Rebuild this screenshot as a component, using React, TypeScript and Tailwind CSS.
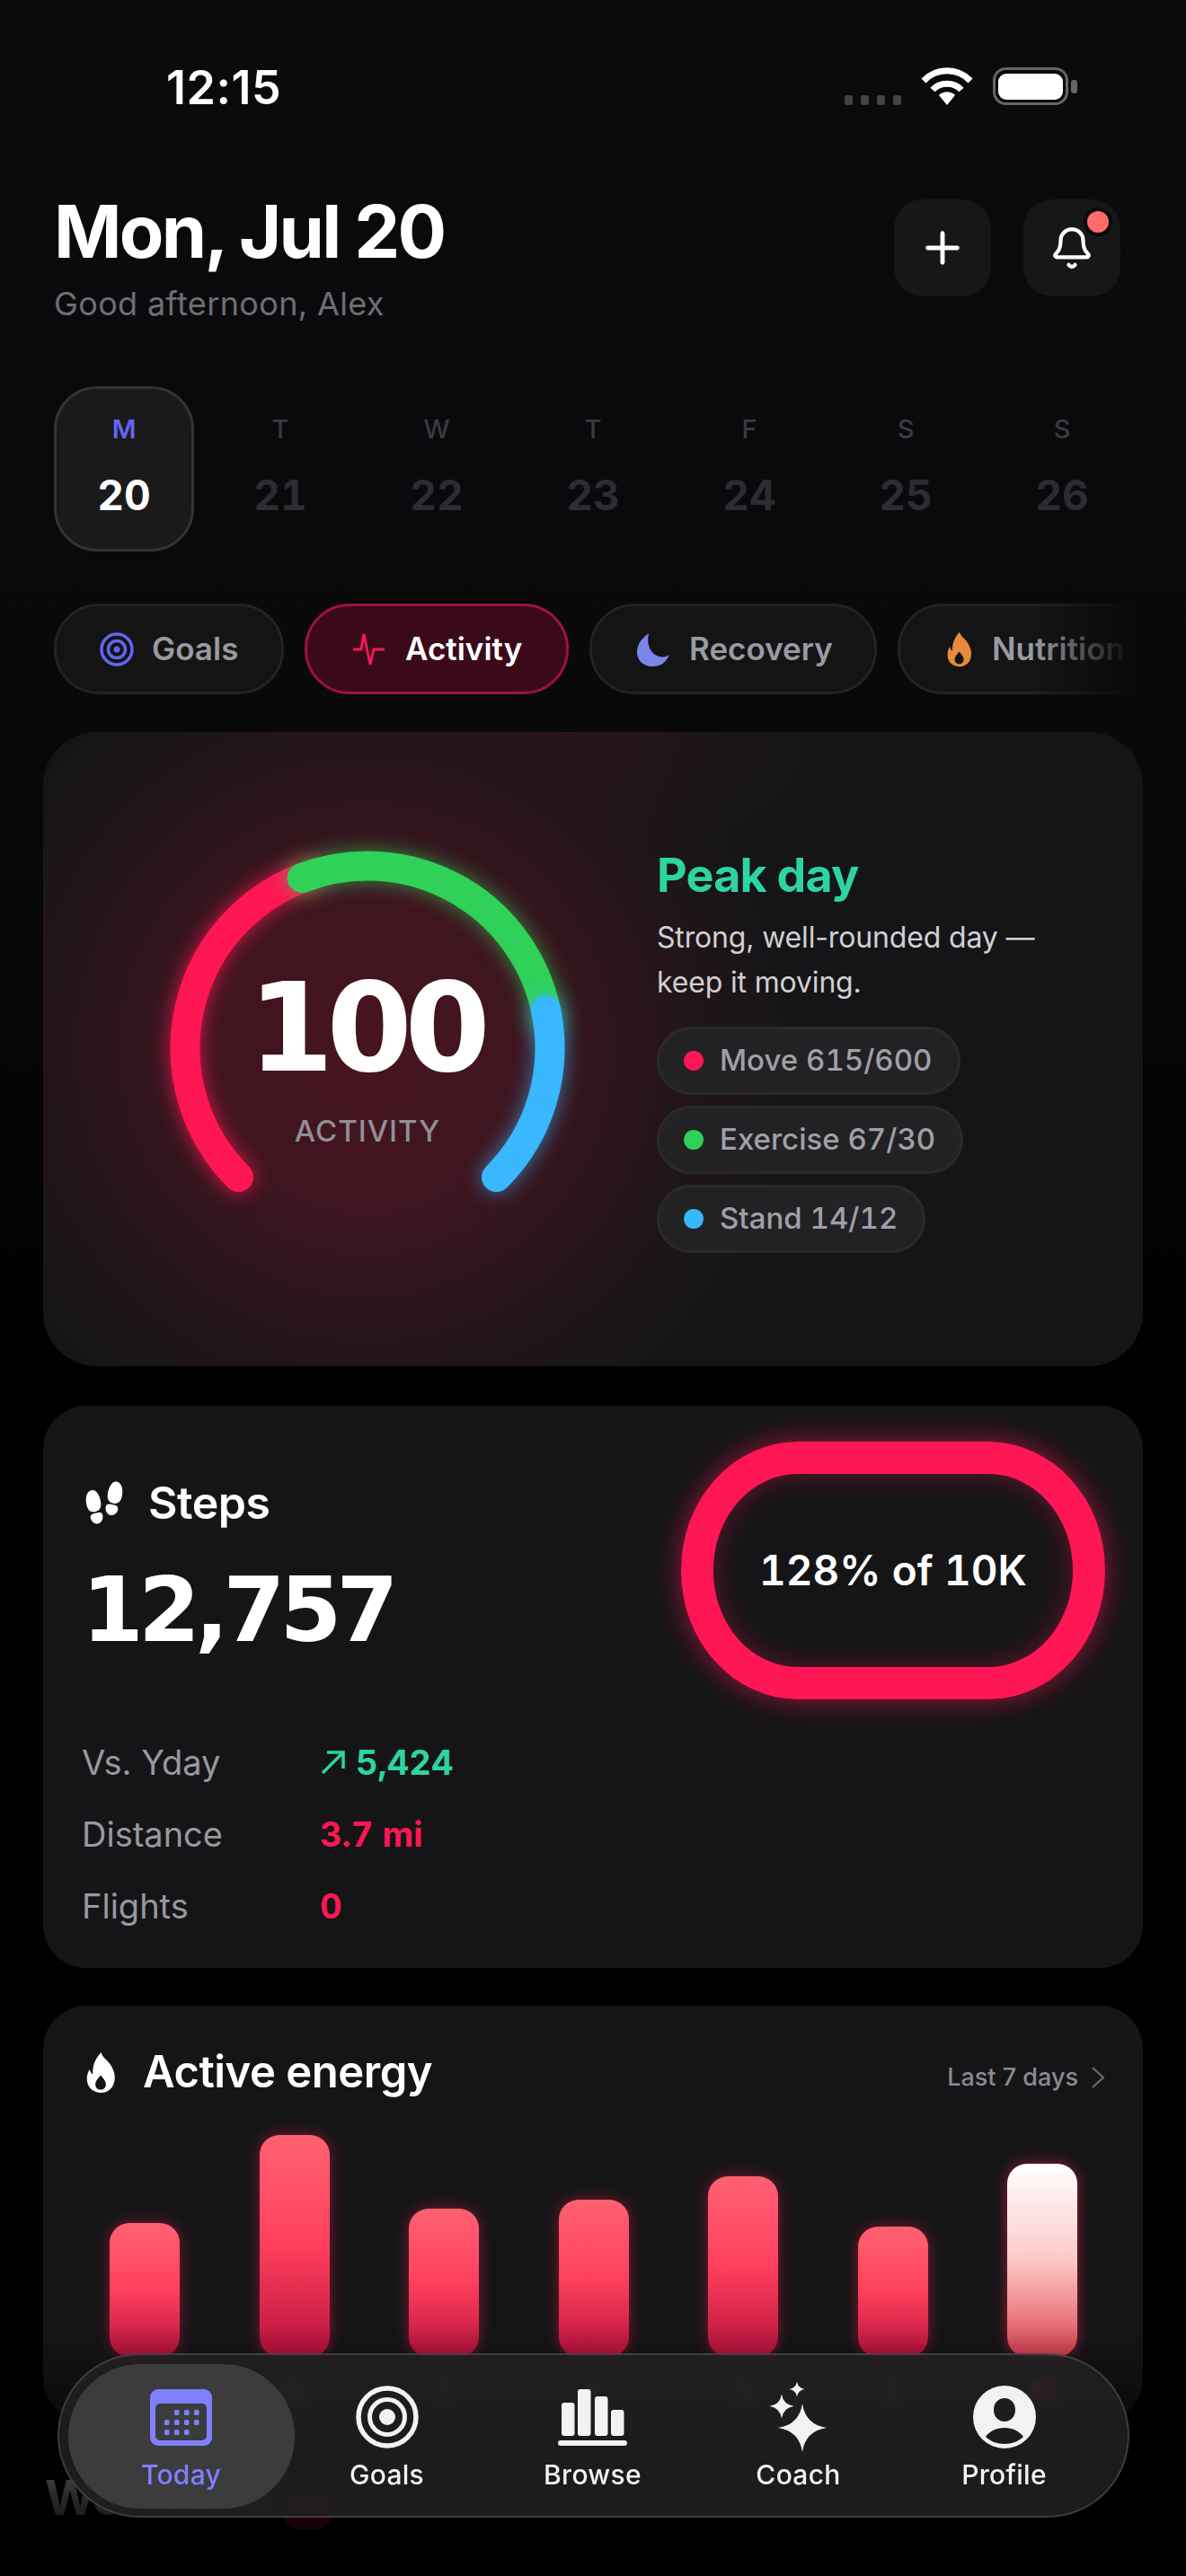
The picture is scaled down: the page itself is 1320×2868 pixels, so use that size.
import React from 'react';
import { Bell, Plus } from 'lucide-react';
import { IoFootsteps } from 'react-icons/io5';

const week = [
  { d: 'T', n: 21 },
  { d: 'W', n: 22 },
  { d: 'T', n: 23 },
  { d: 'F', n: 24 },
  { d: 'S', n: 25 },
  { d: 'S', n: 26 },
];

const bars = [
  { h: 149, label: 'T' },
  { h: 247, label: 'W' },
  { h: 165, label: 'T' },
  { h: 175, label: 'F' },
  { h: 201, label: 'S' },
  { h: 145, label: 'S' },
  { h: 215, label: 'M', today: true },
];

const FLAME =
  'M19 1c1.5 6 8.5 9.5 12 16 3.500 6.500 4.500 12 3 18-1.800 7.500-8 12-15 12S5.500 43 3.500 36C2 30.500 3 25 6 20.500c.5 2.500 1.500 4.500 3.500 5.500C9 17 12 8 19 1Zm-.5 26c-3 3.500-6 6.500-6 10.500 0 3.800 2.800 6 6 6s6-2.300 6-6c0-4-3-7-6-10.500Z';

function polar(angle: number) {
  const rad = ((angle - 90) * Math.PI) / 180;
  return { x: 220 + 203 * Math.cos(rad), y: 220 + 203 * Math.sin(rad) };
}

function arc(from: number, to: number) {
  const a = polar(from);
  const b = polar(to);
  const large = to - from > 180 ? 1 : 0;
  return `M${a.x} ${a.y}A203 203 0 ${large} 1 ${b.x} ${b.y}`;
}

function star(cx: number, cy: number, r: number) {
  const k = r * 0.13;
  return `M${cx} ${cy - r}Q${cx + k} ${cy - k} ${cx + r} ${cy}Q${cx + k} ${cy + k} ${cx} ${cy + r}Q${cx - k} ${cy + k} ${cx - r} ${cy}Q${cx - k} ${cy - k} ${cx} ${cy - r}Z`;
}

function StatusBar() {
  return (
    <div className="flex h-[42px] mt-[75px] items-center pl-[185px] pr-[120px] justify-between">
      <span className="text-[52px] leading-none font-semibold text-white tracking-[0.01em] mt-[4px]">12:15</span>
      <div className="flex items-end gap-[22px]">
        <div className="flex gap-[9px]">
          <span className="w-[9px] h-[11px] rounded-[3px] bg-[#444]" />
          <span className="w-[9px] h-[11px] rounded-[3px] bg-[#444]" />
          <span className="w-[9px] h-[11px] rounded-[3px] bg-[#444]" />
          <span className="w-[9px] h-[11px] rounded-[3px] bg-[#444]" />
        </div>
        <svg width="58" height="42" viewBox="0 0 58 42" fill="none" stroke="#fff" strokeWidth="7">
          <path d="M3 15C17 0 41 0 55 15" />
          <path d="M13 25C21 16 37 16 45 25" />
          <path d="M20 31L29 42L38 31C33 26 25 26 20 31Z" fill="#fff" stroke="none" />
        </svg>
        <svg width="95" height="42" viewBox="0 0 95 42">
          <rect x="1.500" y="1.500" width="81" height="39" rx="13" fill="none" stroke="#666" strokeWidth="3" />
          <rect x="6" y="7" width="72" height="29" rx="9" fill="#fff" />
          <rect x="87" y="14" width="7" height="15" rx="3" fill="#666" />
        </svg>
      </div>
    </div>
  );
}

function Header() {
  return (
    <div className="flex justify-between mt-[105px] pl-[60px] pr-[73px]">
      <div>
        <h1 className="text-[81px] leading-[90px] -mt-[9px] font-bold text-white tracking-[-0.033em]">Mon, Jul 20</h1>
        <p className="text-[36px] leading-[44px] mt-[13px] text-[#6e6e76] tracking-[0.01em]">Good afternoon, Alex</p>
      </div>
      <div className="flex gap-[36px]">
        <button className="w-[108px] h-[108px] rounded-[32px] bg-[#171717] flex items-center justify-center text-white">
          <Plus size={56} strokeWidth={2.1} />
        </button>
        <button className="relative w-[108px] h-[108px] rounded-[32px] bg-[#171717] flex items-center justify-center text-white">
          <Bell size={50} strokeWidth={2} />
          <span className="absolute top-[9px] right-[9px] w-[32px] h-[32px] rounded-full bg-[#ff6b6b] border-[4px] border-[#0a0a0b]" />
        </button>
      </div>
    </div>
  );
}

function WeekStrip() {
  return (
    <div className="grid grid-cols-7 gap-[18px] mt-[70px] mx-[60px] w-[1200px] text-center">
      <div className="h-[184px] rounded-[48px] bg-[#1a1a1c] border-[3px] border-[#333335] pt-[27px]">
        <div className="text-[29px] leading-[36px] font-semibold text-[#6366f1]">M</div>
        <div className="text-[46px] leading-[56px] mt-[27px] font-bold text-white tabular-nums">20</div>
      </div>
      {week.map((day) => (
        <div key={day.n} className="h-[184px] pt-[30px]">
          <div className="text-[29px] leading-[36px] font-medium text-[#3a3a40]">{day.d}</div>
          <div className="text-[46px] leading-[56px] mt-[27px] font-bold text-[#2c2c32] tabular-nums">{day.n}</div>
        </div>
      ))}
    </div>
  );
}

function Tabs() {
  const base = 'shrink-0 h-[101px] rounded-[50px] border-[3px] flex items-center';
  return (
    <div className="relative mt-[58px] mx-[60px] w-[1200px] overflow-hidden">
      <div className="flex gap-[23px] text-[35px] font-semibold text-[#9a9aa2]">
        <div className={`${base} w-[256px] pl-[48px] gap-[20px] bg-[#141415] border-[#232325]`}>
          <svg width="38" height="38" viewBox="0 0 38 38" fill="none" stroke="#6366f1" strokeWidth="3.500">
            <circle cx="19" cy="19" r="17" />
            <circle cx="19" cy="19" r="9.500" />
            <circle cx="19" cy="19" r="3.500" fill="#6366f1" stroke="none" />
          </svg>
          Goals
        </div>
        <div className={`${base} w-[294px] pl-[50px] gap-[21px] bg-[#3b0a1a] border-[#a01238] text-white`}>
          <svg width="38" height="38" viewBox="0 0 38 38" fill="none" stroke="#ff1654" strokeWidth="2.800">
            <path d="M1 19h9l3-17 7 34 4-17h12" />
          </svg>
          Activity
        </div>
        <div className={`${base} w-[320px] pl-[49px] gap-[21px] bg-[#141415] border-[#232325]`}>
          <svg width="38" height="38" viewBox="0 0 38 38">
            <path d="M14 1C7 6 1 13 1 22c0 9 7 16 17 16 9 0 15-4 19-13-3 2-7 3-11 2-9-2-15-13-12-26Z" fill="#7a85ea" />
          </svg>
          Recovery
        </div>
        <div className={`${base} w-[320px] pl-[49px] gap-[19px] bg-[#141415] border-[#232325]`}>
          <svg width="34" height="40" viewBox="0 0 38 48">
            <path d={FLAME} fill="#e88a3a" fillRule="evenodd" />
          </svg>
          Nutrition
        </div>
      </div>
      <div className="absolute top-0 bottom-0 right-0 w-[110px] bg-gradient-to-l from-[#0a0a0b] to-transparent" />
    </div>
  );
}

function HeroCard() {
  return (
    <section className="mt-[42px] mx-[48px] h-[706px] rounded-[60px] flex bg-[radial-gradient(circle_470px_at_360px_353px,#46141f_0%,#3e1520_38%,#241519_72%,rgba(21,21,23,0)_100%),radial-gradient(ellipse_300px_160px_at_560px_0px,#2a1519,rgba(21,21,23,0)),linear-gradient(#151517,#151517)]">
      <div className="relative w-[440px] h-[440px] ml-[141px] mt-[132px] shrink-0">
        <svg width="440" height="440" viewBox="0 0 440 440" fill="none" strokeWidth="33" strokeLinecap="round" className="overflow-visible">
          <path d={arc(-135, -18)} stroke="#ff1654" className="drop-shadow-[0_0_11px_rgba(255,22,84,0.8)]" />
          <path d={arc(-21, 82)} stroke="#30d158" className="drop-shadow-[0_0_11px_rgba(48,209,88,0.65)]" />
          <path d={arc(78, 135)} stroke="#3ab8ff" className="drop-shadow-[0_0_11px_rgba(58,184,255,0.65)]" />
        </svg>
        <div className="absolute inset-0 flex flex-col items-center">
          <span className="mt-[115px] -ml-[4px] text-[137px] leading-[166px] font-bold font-['DejaVu_Sans',sans-serif] text-white tracking-[-0.06em]">100</span>
          <span className="mt-[11px] text-[33px] leading-[40px] font-medium text-[#8f8f96] tracking-[0.03em]">ACTIVITY</span>
        </div>
      </div>
      <div className="ml-[102px] mt-[130px]">
        <h2 className="text-[52px] leading-[60px] font-bold text-[#2dd4a0] tracking-[-0.015em]">Peak day</h2>
        <p className="text-[32px] leading-[50px] mt-[14px] text-[#d0d0d4] w-[440px] tracking-[-0.005em]">Strong, well-rounded day — keep it moving.</p>
        <div className="mt-[24px] flex flex-col items-start gap-[12px]">
          <Pill color="bg-[#ff1654]" text="Move 615/600" />
          <Pill color="bg-[#30d158]" text="Exercise 67/30" />
          <Pill color="bg-[#3ab8ff]" text="Stand 14/12" />
        </div>
      </div>
    </section>
  );
}

function Pill({ color, text }: { color: string; text: string }) {
  return (
    <div className="h-[76px] rounded-[38px] bg-[#222224] border-[3px] border-[#2a2a2c] flex items-center pl-[27px] pr-[28px] gap-[18px] text-[33px] font-medium text-[#a0a0a8] tabular-nums">
      <span className={`w-[22px] h-[22px] rounded-full ${color}`} />
      {text}
    </div>
  );
}

function StepsCard() {
  const rows = [
    { label: 'Vs. Yday', value: '5,424', cls: 'text-[#2dd4a0]', up: true },
    { label: 'Distance', value: '3.7 mi', cls: 'text-[#ff1654]' },
    { label: 'Flights', value: '0', cls: 'text-[#ff1654]' },
  ];
  return (
    <section className="mt-[44px] mx-[48px] h-[626px] rounded-[48px] bg-[#151517] flex justify-between pl-[43px] pr-[42px]">
      <div>
        <div className="flex items-center mt-[80px] gap-[24px]">
          <IoFootsteps className="text-white" size={50} />
          <span className="text-[50px] leading-[56px] font-semibold text-white tracking-[-0.01em]">Steps</span>
        </div>
        <div className="text-[99px] leading-[118px] mt-[33px] font-bold font-['DejaVu_Sans',sans-serif] text-white tracking-[-0.06em]">12,757</div>
        <div className="mt-[85px] flex flex-col gap-[30px]">
          {rows.map((row) => (
            <div key={row.label} className="flex items-center h-[50px] text-[38px]">
              <span className="w-[265px] text-[#98989f]">{row.label}</span>
              {row.up && (
                <svg width="30" height="30" viewBox="0 0 30 30" fill="none" stroke="#2dd4a0" strokeWidth="3.500" className="mr-[10px]">
                  <path d="M3 27L26 4M8 4h18v18" />
                </svg>
              )}
              <span className={`font-bold tabular-nums ${row.cls}`}>{row.value}</span>
            </div>
          ))}
        </div>
      </div>
      <div className="mt-[40px] w-[472px] h-[287px] rounded-[130px/143px] border-[36px] border-[#ff1654] flex items-center justify-center shadow-[0_0_30px_rgba(255,22,84,0.6),inset_0_0_30px_rgba(255,22,84,0.35)]">
        <span className="text-[46px] font-semibold text-white tabular-nums whitespace-nowrap">128% of 10K</span>
      </div>
    </section>
  );
}

function EnergyCard() {
  return (
    <section className="mt-[42px] mx-[48px] h-[463px] rounded-[48px] bg-[#151517] px-[46px]">
      <div className="flex items-center justify-between pt-[48px]">
        <div className="flex items-center gap-[28px]">
          <svg width="37" height="47" viewBox="0 0 38 48">
            <path d={FLAME} fill="#fff" fillRule="evenodd" />
          </svg>
          <span className="text-[49px] leading-[50px] font-semibold text-white tracking-[-0.01em]">Active energy</span>
        </div>
        <div className="flex items-center text-[27px] font-medium text-[#8a8a90] mt-[12px] -mr-[4px] gap-[14px]">
          Last 7 days
          <svg width="16" height="24" viewBox="0 0 16 24" fill="none" stroke="#6a6a70" strokeWidth="2.200">
            <path d="M2 1l12 11L2 23" />
          </svg>
        </div>
      </div>
      <div className="flex items-end justify-between h-[247px] mt-[43px] pl-[28px] pr-[27px]">
        {bars.map((bar, i) => (
          <div
            key={i}
            style={{ height: bar.h }}
            className={`w-[78px] rounded-[22px] ${
              bar.today
                ? 'bg-gradient-to-b from-white via-[#fcc8c8] to-[#d83a50] shadow-[0_0_16px_rgba(255,40,80,0.55)]'
                : 'bg-gradient-to-b from-[#ff6072] via-[#ff3f5c] to-[#b80e3e] shadow-[0_0_16px_rgba(255,30,80,0.45)]'
            }`}
          />
        ))}
      </div>
      <div className="flex justify-between pl-[28px] pr-[27px] mt-[14px]">
        {bars.map((bar, i) => (
          <span key={i} className={`w-[78px] text-center text-[32px] font-semibold ${bar.today ? 'text-[#ff1654]' : 'text-[#55555c]'}`}>
            {bar.label}
          </span>
        ))}
      </div>
    </section>
  );
}

function NavItem({ label, active, children }: { label: string; active?: boolean; children: React.ReactNode }) {
  return (
    <div className={`flex flex-col items-center w-[229px] ${active ? 'text-[#8080ff]' : 'text-[#f2f2f2]'}`}>
      <div className="h-[80px] flex items-center justify-center">{children}</div>
      <span className="text-[30px] leading-[36px] mt-[6px] font-medium tracking-[0.01em]">{label}</span>
    </div>
  );
}

function NavBar() {
  return (
    <nav className="absolute left-[64px] top-[2620px] w-[1193px] h-[183px] rounded-[92px] border-[2px] border-white/15 bg-[rgba(33,33,34,0.84)] backdrop-blur-[5px] pl-[21px] pt-[29px]">
      <div className="absolute left-[10px] top-[10px] w-[252px] h-[161px] rounded-[80px] bg-[#3c3c3e]" />
      <div className="relative flex">
        <NavItem label="Today" active>
          <svg width="69" height="63" viewBox="0 0 69 63">
            <rect width="69" height="63" rx="9" fill="#8080ff" />
            <rect x="6" y="16" width="57" height="41" rx="5" fill="#3c3c3e" />
            {[27, 38, 49].map((x) => <rect key={x} x={x} y="23" width="5.500" height="6" rx="1.500" fill="#8080ff" />)}
            {[16, 27, 38, 49].map((x) => <rect key={x} x={x} y="34" width="5.500" height="6" rx="1.500" fill="#8080ff" />)}
            {[16, 27, 38].map((x) => <rect key={x} x={x} y="45" width="5.500" height="6" rx="1.500" fill="#8080ff" />)}
          </svg>
        </NavItem>
        <NavItem label="Goals">
          <svg width="70" height="70" viewBox="0 0 70 70" fill="none" stroke="#f2f2f2" strokeWidth="5.500">
            <circle cx="35" cy="35" r="32" />
            <circle cx="35" cy="35" r="19.500" strokeWidth="5" />
            <circle cx="35" cy="35" r="9" fill="#f2f2f2" stroke="none" />
          </svg>
        </NavItem>
        <NavItem label="Browse">
          <svg width="77" height="63" viewBox="0 0 77 63" fill="#f2f2f2">
            <rect x="4" y="15" width="14.500" height="37" rx="3" />
            <rect x="22" y="0" width="14.500" height="52" rx="3" />
            <rect x="41" y="8" width="14.500" height="44" rx="3" />
            <rect x="59" y="23" width="14.500" height="29" rx="3" />
            <rect x="0" y="57" width="77" height="6" rx="3" />
          </svg>
        </NavItem>
        <NavItem label="Coach">
          <svg width="66" height="80" viewBox="0 0 66 80" fill="#f2f2f2">
            <path d={star(37, 52, 27)} />
            <path d={star(14, 28, 13.500)} />
            <path d={star(31, 9, 8.500)} />
          </svg>
        </NavItem>
        <NavItem label="Profile">
          <svg width="70" height="70" viewBox="0 0 70 70">
            <path
              fill="#f2f2f2"
              fillRule="evenodd"
              d="M35 0a35 35 0 1 1 0 70a35 35 0 1 1 0-70ZM35 14c-7 0-12 5.500-12 13s5 13 12 13 12-5.500 12-13-5-13-12-13ZM14 57c5 5 13 8 21 8s16-3 21-8c-4-6-12-10-21-10s-17 4-21 10Z"
            />
          </svg>
        </NavItem>
      </div>
    </nav>
  );
}

export default function App() {
  return (
    <div className="relative w-[1320px] h-[2868px] overflow-hidden bg-[linear-gradient(#0b0b0d_0px,#09090b_800px,#000_1550px)] font-[Inter,sans-serif]">
      <StatusBar />
      <Header />
      <WeekStrip />
      <Tabs />
      <HeroCard />
      <StepsCard />
      <EnergyCard />
      <div className="flex items-center gap-[8px] mt-[50px] ml-[50px]">
        <h2 className="text-[54px] leading-[64px] font-bold text-white">Workouts</h2>
        <span className="w-[58px] h-[40px] rounded-full bg-[#ff1654] mt-[30px]" />
      </div>
      {/* fade under the floating tab bar */}
      <div className="absolute left-0 right-0 top-[2590px] bottom-0 bg-[linear-gradient(rgba(0,0,0,0)_0px,rgba(0,0,0,0.5)_100px,rgba(0,0,0,0.84)_190px,#000_260px)]" />
      <NavBar />
    </div>
  );
}
